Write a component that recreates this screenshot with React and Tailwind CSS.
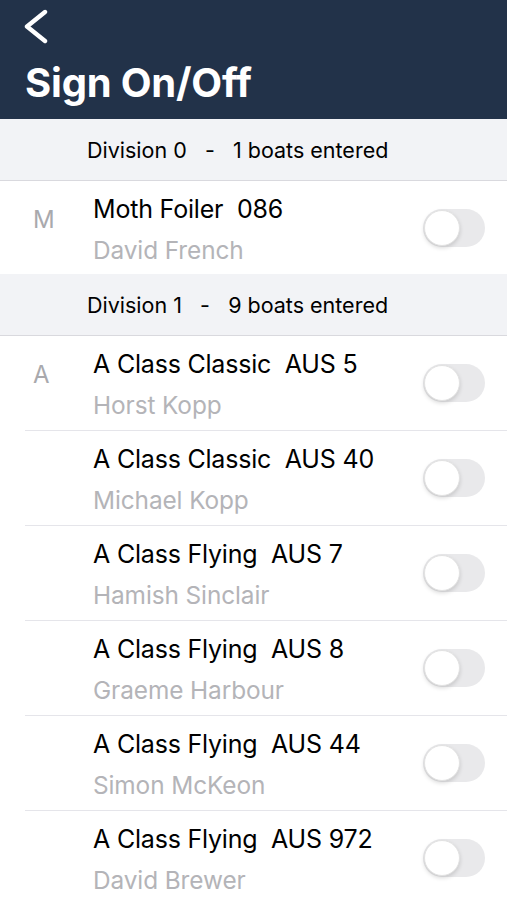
const divisions = [
    {
        label: "Division 0",
        count: "1 boats entered",
        groups: [
            {
                letter: "M",
                boats: [{ name: "Moth Foiler  086", skipper: "David French" }],
            },
        ],
    },
    {
        label: "Division 1",
        count: "9 boats entered",
        groups: [
            {
                letter: "A",
                boats: [
                    { name: "A Class Classic  AUS 5", skipper: "Horst Kopp" },
                    { name: "A Class Classic  AUS 40", skipper: "Michael Kopp" },
                    { name: "A Class Flying  AUS 7", skipper: "Hamish Sinclair" },
                    { name: "A Class Flying  AUS 8", skipper: "Graeme Harbour" },
                    { name: "A Class Flying  AUS 44", skipper: "Simon McKeon" },
                    { name: "A Class Flying  AUS 972", skipper: "David Brewer" },
                ],
            },
        ],
    },
];

const Toggle = () => (
    <div className="relative h-[38px] w-[62px] shrink-0 rounded-full bg-[#e9e9eb]">
        <div className="absolute left-[1px] top-[1px] h-[36px] w-[36px] rounded-full border border-[#e2e2e2] bg-white shadow-[0_2px_4px_rgba(0,0,0,0.15)]" />
    </div>
);

const BoatRow = ({ letter, boat, last }) => (
    <div className="bg-white pl-[25px]">
        <div className={`flex ${last ? "h-[93px]" : "h-[95px] border-b border-[#e5e5ea]"}`}>
            <div className="w-[68px] shrink-0 pl-[8px] pt-[21px] text-[24px] text-[#a9a9ad]">{letter}</div>
            <div className="flex flex-1 items-center pr-[22px]">
                <div className="flex flex-1 flex-col pt-[2px]">
                    <span className="whitespace-pre text-[25px] leading-[30px] tracking-[-0.2px] text-black">{boat.name}</span>
                    <span className="mt-[12px] text-[24.4px] leading-[28px] tracking-[-0.1px] text-[#b4b4b8]">{boat.skipper}</span>
                </div>
                <Toggle />
            </div>
        </div>
    </div>
);

export default function App() {
    return (
        <div className="h-[900px] w-[507px] overflow-hidden bg-white font-['Inter','Liberation_Sans',sans-serif]">
            {/* Header */}
            <div className="h-[119px] bg-[#223249] pl-[22px] pt-[9px] text-white">
                <svg width="28" height="36" viewBox="0 0 28 36" fill="none" stroke="currentColor" strokeWidth="4.4" strokeLinecap="round" strokeLinejoin="round">
                    <polyline points="23,3 5,17.5 23,32" />
                </svg>
                <h1 className="ml-[3px] mt-[16px] text-[40px] font-bold leading-[44px] tracking-[-0.2px]">Sign On/Off</h1>
            </div>

            {divisions.map((div) => (
                <div key={div.label}>
                    <div className="flex h-[62px] items-center border-b border-[#d9d9de] bg-[#f2f3f6] pl-[87px] pt-[2px] text-[21.5px] text-black">
                        <span className="whitespace-pre">{`${div.label}   -   ${div.count}`}</span>
                    </div>
                    {div.groups.map((g) =>
                        g.boats.map((boat, i) => (
                            <BoatRow
                                key={boat.name}
                                letter={i === 0 ? g.letter : ""}
                                boat={boat}
                                last={i === g.boats.length - 1}
                            />
                        ))
                    )}
                </div>
            ))}
        </div>
    );
}
